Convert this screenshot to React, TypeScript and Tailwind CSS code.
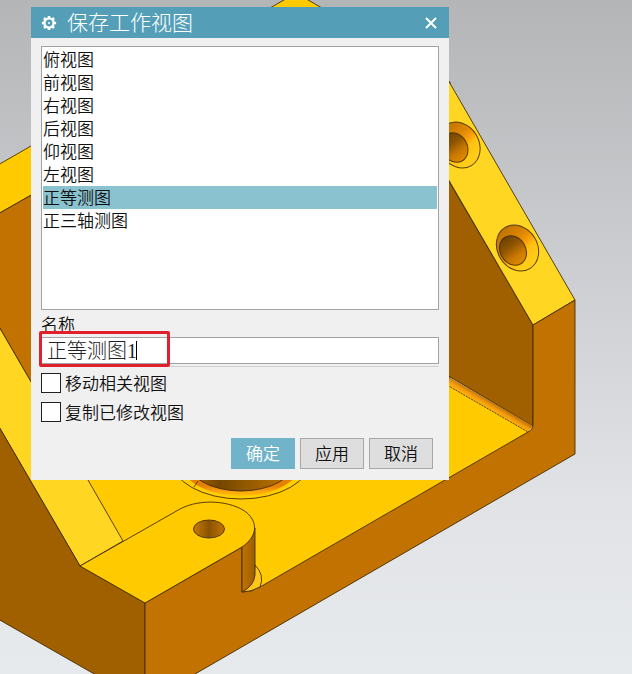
import { useState } from "react";

const views = ["俯视图", "前视图", "右视图", "后视图", "仰视图", "左视图", "正等测图", "正三轴测图"];

const options = ["移动相关视图", "复制已修改视图"];

function GearIcon() {
  return (
    <svg viewBox="0 0 16 16" className="size-4" fill="none" stroke="white" aria-hidden="true">
      <circle cx="8" cy="8" r="4.6" strokeWidth="2.4" />
      <circle cx="8" cy="8" r="1" fill="white" stroke="none" />
      <path
        d="M8 0.9v2.4M8 12.7v2.4M0.9 8h2.4M12.7 8h2.4M3 3l1.6 1.6M11.4 11.4 13 13M3 13l1.6-1.6M11.4 4.6 13 3"
        strokeWidth="2.6"
      />
    </svg>
  );
}

function CloseIcon() {
  return (
    <svg viewBox="0 0 12 12" className="size-3" fill="none" stroke="white" strokeWidth="2" aria-hidden="true">
      <path d="M1 1l10 10M11 1 1 11" />
    </svg>
  );
}

function CounterSink({ x, y }: { x: number; y: number }) {
  return (
    <g transform={`translate(${x} ${y})`}>
      <ellipse rx="24" ry="20" transform="rotate(59)" fill="url(#sink)" />
      <ellipse cx="-4.5" cy="2.5" rx="15.4" ry="12.8" transform="rotate(59 -4.5 2.5)" fill="url(#bore)" />
    </g>
  );
}

function ModelView() {
  return (
    <svg
      viewBox="0 0 632 674"
      preserveAspectRatio="xMidYMid slice"
      className="absolute inset-0 size-full"
      stroke="#3d2800"
      strokeWidth="1"
      strokeOpacity="0.85"
      strokeLinejoin="round"
      aria-hidden="true"
    >
      <defs>
        <linearGradient id="backdrop" x1="0" y1="0" x2="0" y2="1">
          <stop offset="0" stopColor="#b4b5b7" />
          <stop offset="0.45" stopColor="#cfd1d4" />
          <stop offset="0.75" stopColor="#e1e3e6" />
          <stop offset="1" stopColor="#e7eaed" />
        </linearGradient>
        {/* the ellipses are turned by 59 degrees, so their shading is turned back */}
        <linearGradient
          id="sink"
          gradientUnits="userSpaceOnUse"
          gradientTransform="rotate(-59)"
          x1="-14"
          y1="-18"
          x2="14"
          y2="12"
        >
          <stop offset="0" stopColor="#c27400" />
          <stop offset="0.4" stopColor="#e08800" />
          <stop offset="0.58" stopColor="#fb9f0a" />
          <stop offset="0.72" stopColor="#ffc010" />
          <stop offset="1" stopColor="#ffcd18" />
        </linearGradient>
        <linearGradient
          id="bore"
          gradientUnits="userSpaceOnUse"
          gradientTransform="rotate(-59 -4.5 2.5)"
          x1="-14"
          y1="-9"
          x2="4"
          y2="15"
        >
          <stop offset="0" stopColor="#6f4300" />
          <stop offset="0.35" stopColor="#8e5500" />
          <stop offset="0.7" stopColor="#c97800" />
          <stop offset="1" stopColor="#e08a00" />
        </linearGradient>
        <linearGradient id="fillet" gradientUnits="userSpaceOnUse" x1="492" y1="400" x2="486" y2="410">
          <stop offset="0" stopColor="#a86200" />
          <stop offset="0.5" stopColor="#f59a10" />
          <stop offset="1" stopColor="#ffc400" />
        </linearGradient>
        <linearGradient id="pocket" x1="0" y1="0" x2="1" y2="0">
          <stop offset="0" stopColor="#b87000" />
          <stop offset="0.3" stopColor="#744600" />
          <stop offset="1" stopColor="#c87a00" />
        </linearGradient>
        <linearGradient id="pin" x1="0" y1="0" x2="1" y2="0">
          <stop offset="0" stopColor="#c87a00" />
          <stop offset="0.5" stopColor="#8b5300" />
          <stop offset="1" stopColor="#c07400" />
        </linearGradient>
        <linearGradient id="boss" x1="0" y1="0" x2="1" y2="0">
          <stop offset="0" stopColor="#c07200" />
          <stop offset="1" stopColor="#9c5e00" />
        </linearGradient>
        <linearGradient id="rim" gradientUnits="userSpaceOnUse" x1="0" y1="486" x2="0" y2="498">
          <stop offset="0" stopColor="#e58000" />
          <stop offset="0.5" stopColor="#ffa810" />
          <stop offset="1" stopColor="#ffd000" />
        </linearGradient>
      </defs>

      <rect width="632" height="674" fill="url(#backdrop)" stroke="none" />

      {/* rear rim and far wall */}
      <path d="M-2 165 296-7 450 82V196L296 44-2 214Z" fill="#ffca00" />
      <path d="M-2 214 296 44 450 196V480H88L-2 325Z" fill="#c17200" />

      {/* base floor */}
      <path d="M88 480 280 288 449 386 528 432 260 587 145 603 80 566Z" fill="#ffca00" stroke="none" />

      {/* right wall */}
      <path d="M440 166 533 325V426L440 371Z" fill="#a06000" />
      <path d="M440 372 533 426 528 432 440 381Z" fill="url(#fillet)" stroke="none" />
      <path d="M440 381 528 432" fill="none" strokeDasharray="2 1" />
      <path d="M440 66 575 300 533 325 440 165Z" fill="#ffd621" />
      <CounterSink x={459} y={145} />
      <CounterSink x={517.5} y={248} />

      {/* left wall */}
      <path d="M-2 325 88 480 123 541 80 566-2 425Z" fill="#ffd621" />
      <path d="M-2 425 80 566 145 603V703L-2 619Z" fill="#a06000" />

      {/* centre bore */}
      <ellipse cx="241" cy="459" rx="70" ry="40" fill="#ffce00" />
      <ellipse cx="241" cy="459" rx="62" ry="37" fill="url(#rim)" stroke="none" />
      <ellipse cx="241" cy="459" rx="55" ry="32" fill="url(#pocket)" />
      <path d="M198 481 194 487" />

      {/* front face */}
      <path
        d="M145 603 242 547V592Q252 592 260 587L528 432Q533 430 533 424V325L575 300V454L145 703Z"
        fill="#c17200"
      />

      {/* boss with pin hole */}
      <path d="M255 565Q265 575 260 587 251 592 242 592 255 585 255 565Z" fill="#ffc61a" />
      <path d="M242 545 255 528V575Q254 586 242 592Z" fill="url(#boss)" />
      <path d="M80 566 180 509C201 498 231 501 246 512 258 522 258 536 242 547L145 603Z" fill="#ffca00" />
      <ellipse cx="209" cy="529" rx="15.5" ry="9" fill="url(#pin)" />
    </svg>
  );
}

export default function App() {
  const [selected, setSelected] = useState("正等测图");
  const [name, setName] = useState("正等测图1");

  return (
    <main className="relative min-h-screen overflow-hidden px-[31px] py-[7px] font-['Noto_Sans_CJK_SC',sans-serif] text-[17px] font-[350] text-[#111]">
      <ModelView />

      <form
        role="dialog"
        aria-labelledby="dialog-title"
        className="relative w-full max-w-[418px] bg-[#f0f0f0]"
        onSubmit={(e) => e.preventDefault()}
      >
        <header className="flex h-[31px] items-center bg-[#549fb7] pr-3 pl-2.5 text-white">
          <GearIcon />
          <h1 id="dialog-title" className="ml-2.5 flex-1 pb-0.5 text-[21px] leading-[29px] font-light">
            保存工作视图
          </h1>
          <button type="button" aria-label="关闭">
            <CloseIcon />
          </button>
        </header>

        <div className="px-2.5 pt-2">
          <ul role="listbox" aria-label="视图" className="h-[264px] overflow-y-auto border border-[#a0a4a8] bg-white p-px">
            {views.map((view) => (
              <li key={view} role="presentation">
                <button
                  type="button"
                  role="option"
                  aria-selected={view === selected}
                  onClick={() => setSelected(view)}
                  className={`block h-[23px] w-full pb-0.5 text-left leading-[21px] ${
                    view === selected ? "bg-[#8bc2d0]" : ""
                  }`}
                >
                  {view}
                </button>
              </li>
            ))}
          </ul>

          <label htmlFor="view-name" className="block h-[27px] leading-[27px]">
            名称
          </label>
          <div className="relative">
            <input
              id="view-name"
              type="text"
              value={name}
              onChange={(e) => setName(e.target.value)}
              className="block h-[27px] w-full border border-[#a0a4a8] bg-white px-[5px] pb-0.5 font-['Liberation_Serif','Noto_Sans_CJK_SC',serif] text-[20px] leading-[23px] font-light text-[#222] outline-none"
            />
            <span className="absolute top-1 left-[95px] h-[19px] w-px bg-black" />
            <span className="pointer-events-none absolute -top-1.5 -left-0.5 h-9 w-[131px] rounded-xs border-3 border-[#e0202c]" />
          </div>
          <hr className="mt-0.5 border-[#cfcfcf]" />

          <div className="mt-1.5 flex flex-col gap-[9px]">
            {options.map((option) => (
              <label key={option} className="flex h-5 items-center gap-1">
                <input type="checkbox" className="size-5 appearance-none border border-[#222] bg-white checked:bg-[#549fb7]" />
                {option}
              </label>
            ))}
          </div>
        </div>

        <footer className="mt-4 flex justify-end gap-[5px] pr-4 pb-[11px]">
          <button type="submit" className="h-[31px] w-16 bg-[#71b3c8] pb-0.5 text-white">
            确定
          </button>
          <button type="button" className="h-[31px] w-16 border border-[#a8a8a8] bg-[#dedede] pb-0.5">
            应用
          </button>
          <button type="button" className="h-[31px] w-16 border border-[#a8a8a8] bg-[#dedede] pb-0.5">
            取消
          </button>
        </footer>
      </form>
    </main>
  );
}
